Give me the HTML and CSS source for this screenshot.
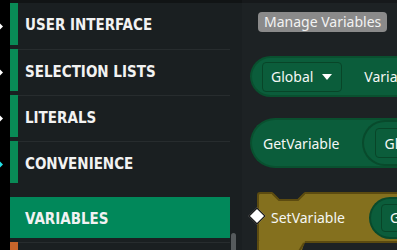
FILE: index.html
```html
<!DOCTYPE html>
<html lang="en">
<head>
    <meta charset="UTF-8">
    <title>Variables</title>
    <link rel="stylesheet" href="styles.css">
</head>
<body>
<div class="rail">
    <div class="rail-slot"><span class="pin"></span></div>
    <div class="rail-slot"><span class="pin"></span></div>
    <div class="rail-slot"><span class="pin"></span></div>
    <div class="rail-slot"><span class="pin pin-cyan"></span></div>
</div>

<div class="sidebar">
    <div class="cats">
        <div class="cat"><span class="cat-bar"></span><span class="cat-label">USER INTERFACE</span></div>
        <div class="cat"><span class="cat-bar"></span><span class="cat-label">SELECTION LISTS</span></div>
        <div class="cat"><span class="cat-bar"></span><span class="cat-label">LITERALS</span></div>
        <div class="cat"><span class="cat-bar"></span><span class="cat-label">CONVENIENCE</span></div>
        <div class="cat-sep"></div>
        <div class="cat cat-active"><span class="cat-label">VARIABLES</span></div>
        <div class="cat cat-next"><span class="cat-bar cat-bar-orange"></span><span class="cat-label"></span></div>
    </div>
    <div class="scroll"><div class="thumb"></div></div>
</div>

<div class="canvas">
    <button class="manage">Manage Variables</button>

    <div class="block block-green block-decl">
        <div class="dropdown">Global
            <svg class="caret" width="10" height="6" viewBox="0 0 10 6"><path d="M0 0 H10 L5 6 Z" fill="#fff"/></svg>
        </div>
        <span class="block-text">Variable</span>
    </div>

    <div class="block block-green block-get">
        <span class="block-text">GetVariable</span>
        <div class="slot">
            <div class="dropdown">Global</div>
        </div>
    </div>

    <div class="block block-olive">
        <svg class="notch" width="33" height="9" viewBox="0 0 33 9">
            <polygon points="0,0 7,7 26,7 33,0" fill="#1d2224"/>
            <polyline points="0,1 7,8 26,8 33,1" fill="none" stroke="#5c4b10" stroke-width="2"/>
        </svg>
        <span class="diamond"></span>
        <span class="block-text">SetVariable</span>
        <div class="slot slot-small">
            <div class="dropdown dropdown-small">Global</div>
        </div>
        <svg class="tab" width="50" height="12" viewBox="0 0 50 12">
            <polygon points="0,0 0,12 44,12 48,0" fill="#84701e"/>
            <polyline points="1,0 1,12" stroke="#5c4b10" stroke-width="2"/>
            <polyline points="41,12 47,2" stroke="#5c4b10" stroke-width="2"/>
        </svg>
    </div>
</div>
</body>
</html>
```

FILE: styles.css
```css
body {
    margin: 0;
    height: 250px;
    overflow: hidden;
    display: flex;
    background: #1d2224;
}

.rail {
    width: 10px;
    flex-shrink: 0;
    background: #000;
    padding-top: 3px;
}

.rail-slot {
    height: 46px;
    display: flex;
    align-items: center;
}

.pin {
    width: 5px;
    height: 5px;
    margin-left: -3px;
    background: #fff;
    transform: rotate(45deg);
}

.pin-cyan {
    background: #22e0e6;
}

.sidebar {
    width: 232px;
    flex-shrink: 0;
    display: flex;
    background: #1a1f21;
    border-top: 3px solid #111415;
}

.cats {
    width: 220px;
    display: flex;
    flex-direction: column;
    gap: 4px;
}

.cat {
    height: 42px;
    flex-shrink: 0;
    display: flex;
}

.cat-bar {
    width: 8px;
    background: #098a56;
}

.cat-bar-orange {
    background: #c8652b;
}

.cat-label {
    flex: 1;
    display: flex;
    align-items: center;
    padding-left: 7px;
    padding-top: 2px;
    border-top: 1px solid #272c2e;
    color: #f2f2f2;
    font-family: "DejaVu Sans Condensed", "DejaVu Sans", sans-serif;
    font-stretch: condensed;
    font-weight: bold;
    font-size: 15px;
}

.cat:first-child .cat-label {
    border-top: none;
}

.cat-sep {
    height: 1px;
    margin-top: 4px;
    margin-bottom: 2px;
    background: #3d4345;
}

.cat-active {
    height: 41px;
    background: #01885a;
}

.cat-active .cat-label {
    border-top: none;
    padding-left: 15px;
}

.scroll {
    width: 12px;
}

.thumb {
    width: 5px;
    height: 30px;
    margin: 230px 0 0 1px;
    border-radius: 3px;
    background: #565b5d;
}

.canvas {
    flex: 1;
    display: flex;
    flex-direction: column;
    align-items: flex-start;
    padding-left: 8px;
    overflow: hidden;
    border-top: 3px solid #16191b;
    font-family: "Noto Sans", sans-serif;
    color: #f4f7f5;
}

.manage {
    margin: 9px 0 0 8px;
    height: 20px;
    padding: 0 6px;
    border: none;
    border-radius: 4px;
    background: #8a8a8a;
    color: #f2f2f2;
    font-family: "Noto Sans", sans-serif;
    font-size: 14px;
    line-height: 20px;
}

.block {
    flex-shrink: 0;
    width: 320px;
    box-sizing: border-box;
    display: flex;
    align-items: center;
    white-space: nowrap;
    font-size: 14px;
}

.block-green {
    background: #0b5d3b;
    border: 2px solid #09502f;
    border-right: none;
}

.block-decl {
    margin-top: 24px;
    height: 41px;
    border-radius: 21px 0 0 21px;
    padding-left: 10px;
    gap: 22px;
}

.block-get {
    margin-top: 21px;
    height: 50px;
    border-radius: 25px 0 0 25px;
    padding-left: 11px;
    gap: 23px;
}

.dropdown {
    height: 30px;
    box-sizing: border-box;
    display: flex;
    align-items: center;
    padding: 0 9px 0 8px;
    border: 1px solid #084528;
    border-radius: 4px;
}

.dropdown-small {
    height: 28px;
}

.caret {
    margin-left: 9px;
}

.slot {
    flex: 1;
    height: 46px;
    box-sizing: border-box;
    display: flex;
    align-items: center;
    padding-left: 11px;
    background: #0b5d3b;
    border: 2px solid #084a2c;
    border-right: none;
    border-radius: 23px 0 0 23px;
}

.slot-small {
    height: 42px;
    padding-left: 10px;
    border-radius: 21px 0 0 21px;
}

.block-olive {
    position: relative;
    margin: 24px 0 0 7px;
    height: 51px;
    padding-left: 12px;
    gap: 24px;
    background: #84701e;
    border: 2px solid #5c4b10;
    border-right: none;
    border-radius: 3px 0 0 3px;
}

.notch {
    position: absolute;
    top: -2px;
    left: 13px;
}

.tab {
    position: absolute;
    left: -2px;
    top: 47px;
}

.diamond {
    position: absolute;
    left: -8px;
    top: 16px;
    width: 10px;
    height: 10px;
    background: #fff;
    border: 1px solid #000;
    transform: rotate(45deg);
}
```
